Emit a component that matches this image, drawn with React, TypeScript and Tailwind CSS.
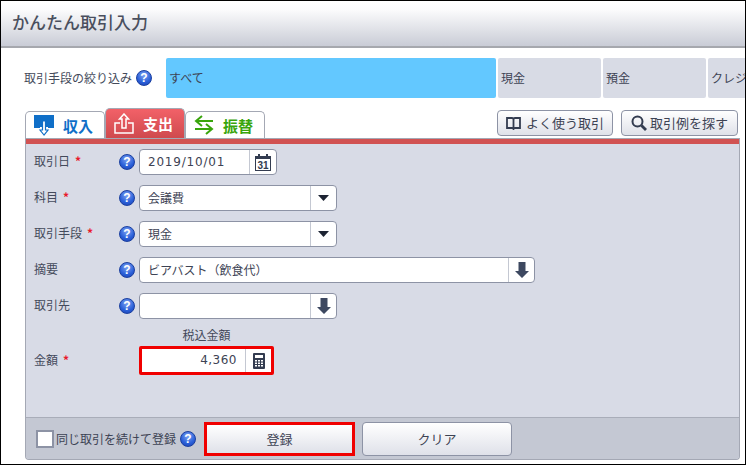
import React from "react";

const font = { fontFamily: '"Noto Sans CJK JP", "Noto Sans", sans-serif' };

function Help({ className = "" }: { className?: string }) {
  return (
    <span className={`flex h-4 w-4 shrink-0 items-center justify-center rounded-full border border-[#1a3fa0] bg-[radial-gradient(circle_at_50%_30%,#7fa4f2,#2a5fd8_60%,#1c3fae)] text-[12px] font-bold leading-none text-white ${className}`} style={{ fontFamily: '"Liberation Sans", sans-serif' }}>
      ?
    </span>
  );
}

function Req() {
  return <span className="ml-[5px] text-[12px] font-bold leading-none text-[#e8192c]">*</span>;
}

function Label({ text, req }: { text: string; req?: boolean }) {
  return (
    <div className="flex w-[85px] shrink-0 items-center pb-[2px] text-[12px] text-[#444a5b]">
      <span>{text}</span>
      {req && <Req />}
    </div>
  );
}

function Caret() {
  return <svg width="11" height="6" viewBox="0 0 11 6"><path d="M0 0h11L5.500 6z" fill="#1d2433" /></svg>;
}

function DownArrow() {
  return <svg width="14" height="16" viewBox="0 0 14 16"><path d="M3.500 0h7v9H14L7 16 0 9h3.500z" fill="#3d4860" /></svg>;
}

function Field({ value, width, icon }: { value: string; width: string; icon: React.ReactNode }) {
  return (
    <div className={`flex h-[26px] items-stretch overflow-hidden rounded-[4px] border border-[#8d93a5] bg-white ${width}`}>
      <div className="flex flex-1 items-center pb-[1px] pl-2 text-[12px] text-[#3d4354]">{value}</div>
      <div className="flex w-[26px] items-center justify-center border-l border-[#c4c8d2]">{icon}</div>
    </div>
  );
}

function Row({ label, req, children }: { label: string; req?: boolean; children: React.ReactNode }) {
  return (
    <div className="flex h-[26px] items-center">
      <Label text={label} req={req} />
      <Help className="mr-1" />
      {children}
    </div>
  );
}

function Chip({ text, className }: { text: string; className: string }) {
  return (
    <div className={`flex h-10 shrink-0 items-center rounded-[2px] pl-[3px] text-[12px] text-[#3d4354] ${className}`}>
      <span className="whitespace-nowrap">{text}</span>
    </div>
  );
}

function Tab({ label, active, color, icon }: { label: string; active?: boolean; color: string; icon: React.ReactNode }) {
  return (
    <div className={`flex w-20 items-center gap-[9px] rounded-t-[5px] border border-b-0 border-[#a4a8b4] pl-2 ${active ? "h-[30px] bg-[linear-gradient(#f26168,#cf4a4e)]" : "h-[27px] bg-white"}`}>
      {icon}
      <span className={`text-[15px] font-bold leading-none ${color}`}>{label}</span>
    </div>
  );
}

export default function App() {
  return (
    <div className="flex h-[465px] w-[746px] flex-col overflow-hidden border border-black bg-white" style={font}>
      <div className="flex h-[47px] shrink-0 items-center border-b-2 border-[#a6a8ae] bg-[linear-gradient(#ffffff,#fbfbfc_20%,#c9ccd6)] pb-[3px] pl-[11px] text-[17px] font-medium text-[#4a4f5e]">
        かんたん取引入力
      </div>
      <div className="mt-[10px] flex shrink-0 items-center overflow-hidden pl-[23px]">
        <div className="flex w-[142px] shrink-0 items-center gap-[4px]">
          <span className="whitespace-nowrap text-[12px] text-[#444a5b]">取引手段の絞り込み</span>
          <Help />
        </div>
        <div className="flex gap-[2px]">
          <Chip text="すべて" className="w-[330px] bg-[#63c8ff]" />
          <Chip text="現金" className="w-[103px] bg-[#d8dbe5]" />
          <Chip text="預金" className="w-[103px] bg-[#d8dbe5]" />
          <Chip text="クレジットカード" className="w-[103px] bg-[#d8dbe5]" />
        </div>
      </div>

      <div className="mt-[10px] flex h-[30px] shrink-0 items-end pl-6 pr-[7px]">
        <Tab
          label="収入"
          color="text-[#0f6fc8]"
          icon={
            <svg width="20" height="21" viewBox="0 0 20 21" fill="none">
              <path d="M6 12H1V1h18v11h-5" stroke="#0f6fc8" strokeWidth="2" fill="#0f6fc8" />
              <path d="M10 20l-4-5h2.500V6h3v9H14z" fill="#fff" stroke="#0f6fc8" strokeWidth="1.200" />
            </svg>
          }
        />
        <Tab
          active
          label="支出"
          color="text-white"
          icon={
            <svg width="20" height="21" viewBox="0 0 20 21" fill="none" stroke="#fff" strokeWidth="1.500">
              <path d="M6 10H1v10h18V10h-5" />
              <path d="M10 1L5.500 6H8v9h4V6h2.500z" />
            </svg>
          }
        />
        <Tab
          label="振替"
          color="text-[#39a50c]"
          icon={
            <svg width="20" height="20" viewBox="0 0 20 20" fill="none" stroke="#39a50c" strokeWidth="2">
              <path d="M19 6H2M8 1L2 6l6 5M1 14h17M12 9l6 5-6 5" />
            </svg>
          }
        />
        <div className="ml-auto mb-[2px] flex gap-[8px]">
          <button className="flex h-[26px] w-[116px] items-center justify-center gap-[5px] rounded-[4px] border border-[#8d93a5] bg-[linear-gradient(#ffffff,#dfe1e9)] text-[13px] text-[#3d4354]">
            <svg width="15" height="14" viewBox="0 0 15 14" fill="none" stroke="#333c50" strokeWidth="1.800"><path d="M7.500 3v10M1 2h5a1.500 1.500 0 0 1 1.500 1.500A1.500 1.500 0 0 1 9 2h5v10H9a1.500 1.500 0 0 0-1.500 1A1.500 1.500 0 0 0 6 12H1z" /></svg>
            よく使う取引
          </button>
          <button className="flex h-[26px] w-[117px] items-center justify-center gap-[3px] rounded-[4px] border border-[#8d93a5] bg-[linear-gradient(#ffffff,#dfe1e9)] text-[13px] text-[#3d4354]">
            <svg width="16" height="16" viewBox="0 0 16 16" fill="none" stroke="#333c50"><circle cx="6.500" cy="6.500" r="5" strokeWidth="2" /><path d="M10.500 10.500L15 15" strokeWidth="2.800" /></svg>
            取引例を探す
          </button>
        </div>
      </div>

      <div className="mb-[4px] ml-6 mr-[5px] flex min-h-0 flex-1 flex-col overflow-hidden rounded-b-[4px] border border-t-0 border-[#a4a8b4] bg-[#d8dbe6]">
        <div className="h-[6px] shrink-0 border-t border-[#a4a8b4] bg-[#d15252]" />
        <div className="flex flex-1 flex-col gap-[10px] pl-[8px] pt-[5px]">
          <Row label="取引日" req>
            <div className="flex h-[26px] w-[138px] items-stretch overflow-hidden rounded-[4px] border border-[#8d93a5] bg-white">
              <div className="flex flex-1 items-center pb-[1px] pl-2 text-[12px] tracking-[0.8px] text-[#3d4354]" style={{ fontFamily: '"DejaVu Sans", sans-serif' }}>2019/10/01</div>
              <div className="flex w-[27px] items-center justify-center border-l border-[#c4c8d2]">
                <svg width="16" height="17" viewBox="0 0 16 17">
                  <rect x="0.500" y="2.500" width="15" height="14" fill="#fff" stroke="#333c50" />
                  <rect x="0" y="2" width="16" height="3" fill="#333c50" />
                  <rect x="3" y="0" width="2" height="3" fill="#333c50" />
                  <rect x="11" y="0" width="2" height="3" fill="#333c50" />
                  <text x="8" y="15" textAnchor="middle" fontSize="10" fontWeight="700" fill="#333c50" fontFamily="Liberation Sans">31</text>
                </svg>
              </div>
            </div>
          </Row>
          <Row label="科目" req><Field value="会議費" width="w-[198px]" icon={<Caret />} /></Row>
          <Row label="取引手段" req><Field value="現金" width="w-[198px]" icon={<Caret />} /></Row>
          <Row label="摘要"><Field value="ビアバスト（飲食代）" width="w-[396px]" icon={<DownArrow />} /></Row>
          <Row label="取引先"><Field value="" width="w-[198px]" icon={<DownArrow />} /></Row>

          <div className="-mt-[2px] flex flex-col">
            <div className="mb-[3px] ml-[105px] w-[135px] text-center text-[12px] leading-[16px] text-[#444a5b]">税込金額</div>
            <div className="flex h-[29px] items-center">
              <Label text="金額" req />
              <div className="ml-5 flex h-[29px] w-[135px] items-stretch overflow-hidden rounded-[2px] border-[3px] border-[#f00000] bg-white">
                <div className="flex flex-1 items-center justify-end pb-[1px] pr-[8px] text-[12px] tracking-[0.5px] text-[#3d4354]" style={{ fontFamily: '"DejaVu Sans", sans-serif' }}>4,360</div>
                <div className="flex w-[26px] items-center justify-center border-l border-[#c4c8d2]">
                  <svg width="12" height="16" viewBox="0 0 12 16">
                    <rect width="12" height="16" rx="1" fill="#333c50" />
                    <rect x="2" y="2" width="8" height="3" fill="#fff" />
                    {[7, 9.500, 12].map((y) => [2, 5, 8].map((x) => <rect key={`${x}-${y}`} x={x} y={y} width="2" height="1.500" fill="#fff" />))}
                  </svg>
                </div>
              </div>
            </div>
          </div>
        </div>
        <div className="flex h-[42px] shrink-0 items-center border-t border-[#a9adb9] bg-[#c4c8d3] pl-[10px] pt-[1px]">
          <span className="h-[18px] w-[18px] shrink-0 border-[2px] border-[#8d93a5] bg-white" />
          <span className="ml-[2px] whitespace-nowrap text-[12px] text-[#3d4354]">同じ取引を続けて登録</span>
          <Help className="ml-[4px]" />
          <button className="ml-[8px] h-[34px] w-[151px] border-[3px] border-[#f00000] bg-[linear-gradient(#ffffff,#dfe1e9)] text-[13px] text-[#3d4354]">登録</button>
          <button className="ml-[7px] h-[34px] w-[150px] rounded-[4px] border border-[#8d93a5] bg-[linear-gradient(#ffffff,#dfe1e9)] text-[13px] text-[#3d4354]">クリア</button>
        </div>
      </div>
    </div>
  );
}
